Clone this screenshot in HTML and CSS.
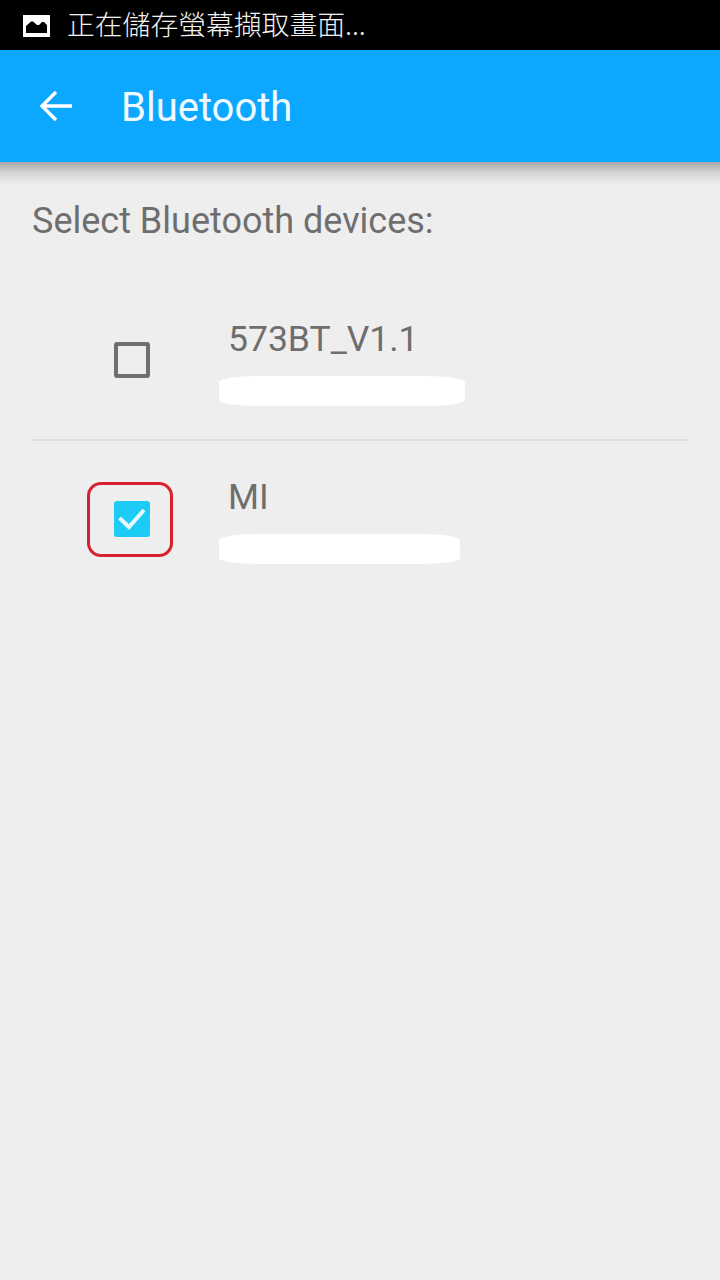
FILE: index.html
```html
<!DOCTYPE html>
<html lang="zh-Hant">
<head>
<meta charset="utf-8">
<title>Bluetooth</title>
<link rel="stylesheet" href="styles.css">
</head>
<body>
<div class="status">
  <svg class="status-icon" viewBox="0 0 27 22" width="27" height="22"><path fill="#fff" fill-rule="evenodd" d="M0 0h27v22H0z M3 18h21v-8l-3-3h-2l-3 3h-2L10 6.500H8L3 11z"/></svg>
  <span class="status-text">正在儲存螢幕擷取畫面...</span>
</div>
<header class="appbar">
  <svg class="back" viewBox="0 0 34 32" width="34" height="32"><path fill="none" stroke="#fff" stroke-width="3.400" d="M33 16H3 M17 2 3 16l14 14"/></svg>
  <h1 class="title">Bluetooth</h1>
</header>
<main class="content">
  <p class="heading">Select Bluetooth devices:</p>
  <ul class="devices">
    <li class="device">
      <div class="check-cell">
        <span class="box"></span>
      </div>
      <div class="info">
        <div class="name">573BT_V1.1</div>
        <div class="mask mask-a"></div>
      </div>
    </li>
    <li class="device">
      <div class="check-cell">
        <span class="box box-on">
          <svg viewBox="0 0 36 36" width="36" height="36"><path fill="none" stroke="#e8f8ff" stroke-width="4" d="M5.500 17l9.500 9L30 9"/></svg>
        </span>
        <span class="annotation"></span>
      </div>
      <div class="info">
        <div class="name">MI</div>
        <div class="mask mask-b"></div>
      </div>
    </li>
  </ul>
</main>
</body>
</html>
```
FILE: styles.css
```css
* { box-sizing: border-box; }
html, body { margin: 0; padding: 0; }
body {
  width: 720px;
  height: 1280px;
  overflow: hidden;
  background: #eeeeee;
  font-family: Roboto, "Noto Sans CJK TC", sans-serif;
  display: flex;
  flex-direction: column;
}
.status {
  height: 50px;
  background: #000;
  display: flex;
  align-items: center;
  padding-left: 23px;
  gap: 17px;
  flex: none;
}
.status-icon { display: block; margin-top: 1px; }
.status-text {
  color: #f2f2f2;
  font-size: 27.800px;
  line-height: 50px;
  height: 50px;
  margin-top: -4px;
  font-family: "Noto Sans CJK TC", sans-serif;
  font-weight: 300;
  white-space: nowrap;
}
.appbar {
  height: 112px;
  flex: none;
  background: #0ca8ff;
  display: flex;
  align-items: center;
  padding-left: 39px;
  gap: 48px;
  position: relative;
}
.appbar::after {
  content: "";
  position: absolute;
  left: 0;
  right: 0;
  top: 100%;
  height: 24px;
  background: linear-gradient(to bottom, rgba(0, 0, 0, 0.3), rgba(0, 0, 0, 0.1) 45%, rgba(0, 0, 0, 0));
}
.back { display: block; }
.title {
  margin: 0;
  color: #eefaff;
  font-size: 40px;
  font-weight: 400;
  line-height: 112px;
  padding-top: 4px;
}
.content { padding: 0 32px; flex: 1; }
.heading {
  margin: 39px 0 0;
  color: #6e6e6e;
  font-size: 36px;
  line-height: 40px;
  height: 82px;
}
.devices { list-style: none; margin: 0; padding: 0; }
.device {
  height: 158px;
  display: flex;
  align-items: center;
  border-bottom: 2px solid #dedede;
}
.device:last-child { border-bottom: none; }
.check-cell {
  width: 187px;
  flex: none;
  display: flex;
  justify-content: center;
  position: relative;
  padding-left: 13px;
  margin-top: -3px;
}
.box {
  width: 36px;
  height: 36px;
  border: 4px solid #6e6e6e;
  border-radius: 3px;
  display: block;
}
.box-on {
  border: none;
  background: #1ccbf6;
}
.box-on svg { display: block; }
.annotation {
  position: absolute;
  left: 55px;
  top: -19px;
  width: 86px;
  height: 75px;
  border: 3px solid #d9212e;
  border-radius: 14px;
}
.info {
  display: flex;
  flex-direction: column;
  height: 100%;
}
.name {
  color: #6e6e6e;
  font-size: 35.500px;
  line-height: 42px;
  margin-top: 35px;
  padding-left: 9px;
}
.mask {
  background: #fff;
  height: 30px;
  margin-top: 16px;
  border-radius: 40px / 6px;
}
.mask-a { width: 246px; }
.mask-b { width: 241px; }
```
